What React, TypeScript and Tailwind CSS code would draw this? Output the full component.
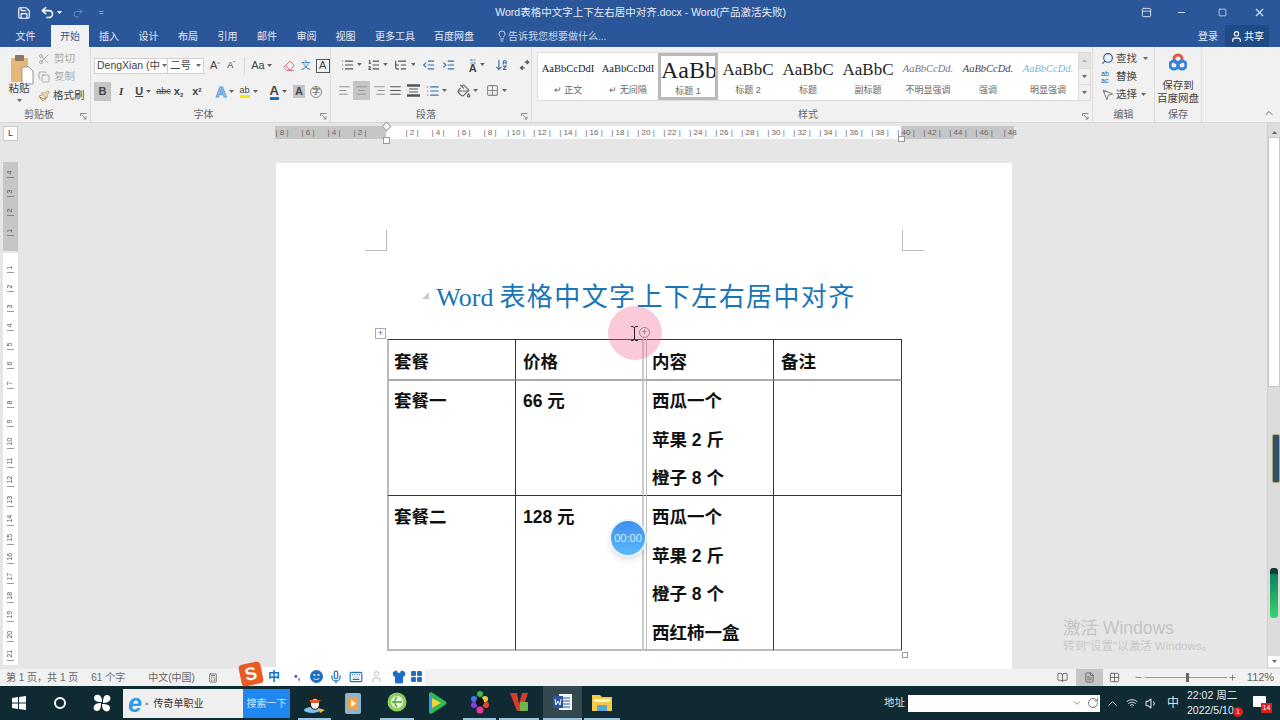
import React from "react"
import {
  AlignCenter, AlignJustify, AlignLeft, AlignRight, ArrowDownAZ, ArrowLeftRight, BookOpen, Calculator, ChevronDown, ChevronUp, Copy, Eraser, FileText,
  Grid2x2, IndentDecrease, IndentIncrease, Keyboard, LayoutGrid, Lightbulb, List, ListOrdered, ListTree, Mic, Minus, MousePointer2, PaintBucket,
  Paintbrush, PanelTop, Plus, Redo2, RotateCw, Save, Scissors, Search, Shirt, Square, Undo2, User, Volume1, Wifi, X,
} from "lucide-react"

const Caret = ({ className = "" }: { className?: string }) => (
  <svg width="5" height="3" viewBox="0 0 5 3" className={className}>
    <path d="M0 0h5L2.5 3z" fill="#666" />
  </svg>
)

const Launcher = () => (
  <svg width="7" height="7" viewBox="0 0 7 7" fill="none" stroke="#888" strokeWidth="1">
    <path d="M.5 3V.5H6.500M2 2l4 4M6 3.500V6H3.500" />
  </svg>
)

function Tab({ w, label, active }: { w: string; label: string; active?: boolean }) {
  return (
    <div className={`${w} h-full flex items-center justify-center text-[10px] ${active ? "bg-[#f1f1f1] text-[#2b579a]" : "text-[#e4ebf5]"}`}>
      {label}
    </div>
  )
}

function Group({ w, label, pr = "", children, launcher = true }: { w: string; label: string; pr?: string; children: React.ReactNode; launcher?: boolean }) {
  return (
    <div className={`${w} h-full flex flex-col border-r border-[#dcdcdc] shrink-0`}>
      <div className="h-[60px] shrink-0">{children}</div>
      <div className={`flex-1 flex items-center justify-center relative text-[10px] text-[#666] ${pr}`}>
        {label}
        {launcher && (
          <span className="absolute right-[3px] top-[6px]">
            <Launcher />
          </span>
        )}
      </div>
    </div>
  )
}

function StyleItem({ sample, label, sampleClass, selected }: { sample: string; label: string; sampleClass: string; selected?: boolean }) {
  return (
    <div className={`w-[60px] h-full flex flex-col items-center overflow-hidden shrink-0 border-[3px] ${selected ? "border-[#b9b9b9]" : "border-transparent"}`}>
      <div className={`h-[28px] flex items-center whitespace-nowrap font-['Liberation_Serif',serif] ${sampleClass}`}>{sample}</div>
      <div className="text-[9px] text-[#666] mt-[1px] whitespace-nowrap">{label}</div>
    </div>
  )
}

const HRuler = ({ nums, className = "" }: { nums: number[]; className?: string }) => (
  <div className={`h-full flex ${className}`}>
    {nums.map((n) => (
      <div key={n} className="w-[26px] shrink-0 text-center text-[8px] leading-[13px] text-[#666] whitespace-nowrap">
        {n === 48 ? "| 48" : "| " + n + " |"}
      </div>
    ))}
  </div>
)

const VRuler = ({ nums, className }: { nums: number[]; className: string }) => (
  <div className={className}>
    {nums.map((n) => (
      <div key={n} className="h-[19.300px] shrink-0 flex items-center justify-center text-[7px] text-[#555] [writing-mode:vertical-rl] rotate-180">
        {"| " + n}
      </div>
    ))}
  </div>
)

const cell = "text-[17.500px] font-bold leading-[38.600px] text-[#111] whitespace-nowrap overflow-hidden"
const col1 = "pl-[5px] border-l-2 border-l-[#bbb] border-r border-r-[#333]"
const col2 = "pl-[7px] border-r-2 border-r-[#ccc]"
const col3 = "pl-[8px] border-r border-r-[#333]"
const col4 = "pl-[7px] border-r border-r-[#333]"
const rowTop = "pt-[3px] border-t border-t-[#333]"
const rowMid = "pt-[1px] border-t-2 border-t-[#aaa]"
const rowEnd = "pt-[2px] border-t border-t-[#333] border-b-2 border-b-[#bbb]"

function Pinned({ w, line, active, children }: { w: string; line?: boolean; active?: boolean; children: React.ReactNode }) {
  return (
    <div className={`${w} h-full shrink-0 flex items-center justify-center ${active ? "bg-[#34484f]" : ""} ${line ? "border-b-2 border-[#9cc4dc]" : ""}`}>
      {children}
    </div>
  )
}

export default function App() {
  return (
    <div className="w-[1280px] h-[720px] overflow-hidden relative font-['Liberation_Sans','Noto_Sans_CJK_SC',sans-serif] select-none bg-[#e6e6e6]">
      {/* title bar */}
      <div className="h-[25px] bg-[#2b579a] flex items-center text-white">
        <div className="w-[31px] flex justify-end">
          <Save size={14} strokeWidth={2} />
        </div>
        <div className="w-[24px] flex justify-end">
          <Undo2 size={15} strokeWidth={2.500} />
        </div>
        <Caret className="ml-[2px] brightness-[3]" />
        <div className="ml-[10px] opacity-30">
          <Redo2 size={12} />
        </div>
        <div className="ml-[15px] text-[8px] opacity-80">=</div>
        <div className="w-[390px] shrink-0 text-center text-[10.500px] text-[#e8eef7] ml-[342px] whitespace-nowrap">
          Word表格中文字上下左右居中对齐.docx - Word(产品激活失败)
        </div>
        <div className="ml-[305px] flex items-center text-[#dfe7f3]">
          <PanelTop size={11} />
          <Minus size={11} className="ml-[24px]" />
          <Square size={9} className="ml-[31px]" />
          <X size={13} className="ml-[26px]" />
        </div>
      </div>

      {/* tabs */}
      <div className="h-[22px] bg-[#2b579a] flex items-center">
        <div className="w-[51px] text-center text-[10px] text-[#e4ebf5]">文件</div>
        <Tab w="w-[38px]" label="开始" active />
        <Tab w="w-[40px]" label="插入" />
        <Tab w="w-[39px]" label="设计" />
        <Tab w="w-[40px]" label="布局" />
        <Tab w="w-[39px]" label="引用" />
        <Tab w="w-[40px]" label="邮件" />
        <Tab w="w-[39px]" label="审阅" />
        <Tab w="w-[39px]" label="视图" />
        <Tab w="w-[60px]" label="更多工具" />
        <Tab w="w-[58px]" label="百度网盘" />
        <div className="ml-[13px] flex items-center text-[10px] text-[#c6d4e8] whitespace-nowrap">
          <Lightbulb size={12} />
          <span>告诉我您想要做什么...</span>
        </div>
        <div className="ml-auto flex items-center h-full">
          <span className="text-[10px] text-[#e4ebf5] mr-[7px]">登录</span>
          <div className="w-[44px] h-full bg-[#1f4a85] flex items-center justify-center gap-[1px] text-[10px] text-white">
            <User size={13} />
            共享
          </div>
          <div className="w-[11px]" />
        </div>
      </div>

      {/* ribbon */}
      <div className="h-[76px] bg-[#f1f1f1] border-b border-[#d8d8d8] flex text-[#444]">
        <Group w="w-[91px]" label="剪贴板" pr="pr-[12px]">
          <div className="flex h-full">
            <div className="w-[38px] pl-[5px] flex flex-col items-center pt-[8px]">
              <svg width="24" height="30" viewBox="0 0 24 30">
                <rect x="1" y="3" width="17" height="24" rx="1" fill="#e6b877" />
                <rect x="5" y="0" width="9" height="6" rx="1" fill="#8b7460" />
                <path d="M12 12h7l4 4v13H12z" fill="#fff" stroke="#999" />
              </svg>
              <span className="text-[10.500px] leading-[13px] mt-[-3px] -ml-[5px]">粘贴</span>
              <Caret className="mt-[4px] -ml-[5px]" />
            </div>
            <div className="flex flex-col pt-[4px] text-[10.500px] gap-[3.500px]">
              <div className="h-[15px] flex items-center gap-[4px] text-[#aaa] whitespace-nowrap">
                <Scissors size={12} />
                剪切
              </div>
              <div className="h-[15px] flex items-center gap-[4px] text-[#aaa] whitespace-nowrap">
                <Copy size={12} />
                复制
              </div>
              <div className="h-[15px] flex items-center gap-[3px] whitespace-nowrap">
                <Paintbrush size={12} className="text-[#b8862f]" />
                格式刷
              </div>
            </div>
          </div>
        </Group>

        <Group w="w-[240px]" label="字体" pr="pr-[14px]">
          <div className="pl-[3px] pt-[9px]">
            <div className="flex items-center h-[19px]">
              <div className="w-[74px] h-[16px] bg-white border border-[#d0d0d0] flex items-center pl-[2px] text-[10.500px] whitespace-nowrap overflow-hidden">
                DengXian (中
                <Caret className="ml-[2px] shrink-0" />
              </div>
              <div className="w-[36px] h-[16px] bg-white border border-l-0 border-[#d0d0d0] flex items-center pl-[2px] text-[10.500px]">
                二号
                <Caret className="ml-auto mr-[2px]" />
              </div>
              <span className="ml-[6px] text-[11px]">A<sup className="text-[6px]">^</sup></span>
              <span className="ml-[7px] text-[9px]">A<sup className="text-[6px]">ˇ</sup></span>
              <span className="ml-[9px] border-l border-[#d8d8d8] pl-[6px] text-[11px]">Aa</span>
              <Caret className="ml-[2px]" />
              <Eraser size={12} className="ml-[11px] text-[#d86a82]" />
              <span className="ml-[6px] text-[10px] leading-[10px] text-[#3e7fb5]">文</span>
              <span className="ml-[5px] w-[14px] h-[14px] border border-[#555] flex items-center justify-center text-[11px]">A</span>
            </div>
            <div className="flex items-center h-[19px] mt-[7px] text-[11px]">
              <div className="w-[17px] h-[19px] bg-[#c6c6c6] flex items-center justify-center font-bold">B</div>
              <span className="ml-[8px] italic font-bold font-['Liberation_Serif',serif]">I</span>
              <span className="ml-[12px] underline font-bold">U</span>
              <Caret className="ml-[3px]" />
              <span className="ml-[5px] text-[9px] line-through">abc</span>
              <span className="ml-[3px] font-bold">x<sub className="text-[6px]">2</sub></span>
              <span className="ml-[9px] font-bold">x<sup className="text-[6px]">2</sup></span>
              <span className="ml-[14px] text-[15px] leading-[15px] font-bold text-[#bcd6ef] [-webkit-text-stroke:1px_#5b9bd5]">A</span>
              <Caret className="ml-[2px]" />
              <span className="ml-[6px] text-[9px] leading-[10px] border-b-[3px] border-[#ffe600]">ab</span>
              <Caret className="ml-[3px]" />
              <span className="ml-[12px] text-[13px] leading-[13px] border-b-[3px] border-[#1f6fb5] font-semibold">A</span>
              <Caret className="ml-[3px]" />
              <span className="ml-[6px] w-[12px] h-[13px] bg-[#c4c4c4] flex items-center justify-center font-bold">A</span>
              <span className="ml-[5px] w-[12px] h-[12px] rounded-full border border-[#888] flex items-center justify-center text-[8px]">字</span>
            </div>
          </div>
        </Group>

        <Group w="w-[201px]" label="段落" pr="pr-[10px]">
          <div className="pl-[10px] pt-[9px]">
            <div className="flex items-center h-[17px] text-[#555]">
              <List size={14} />
              <Caret className="ml-[3px]" />
              <ListOrdered size={14} className="ml-[5px]" />
              <Caret className="ml-[3px]" />
              <ListTree size={14} className="ml-[6px]" />
              <Caret className="ml-[3px]" />
              <IndentDecrease size={14} className="ml-[7px] text-[#3b6ea5]" />
              <IndentIncrease size={14} className="ml-[6px] text-[#3b6ea5]" />
              <span className="ml-[11px] w-[14px] h-[14px] flex flex-col items-center text-[#444]">
                <ArrowLeftRight size={8} className="text-[#3b6ea5]" />
                <span className="text-[11px] leading-[7px] font-bold">A</span>
              </span>
              <Caret className="ml-[1px]" />
              <ArrowDownAZ size={14} className="ml-[10px] text-[#3b6ea5]" />
              <svg width="14" height="14" viewBox="0 0 14 14" fill="none" stroke="#555" strokeWidth="1.500" className="ml-[9px]">
                <path d="M2 10h5M5 8l-2 2 2 2M12 4H7M9 2l2 2-2 2" />
              </svg>
            </div>
            <div className="flex items-center h-[19px] mt-[8px] -ml-[3px] text-[#999]">
              <AlignLeft size={13} />
              <div className="ml-[2px] w-[17px] h-[19px] bg-[#c6c6c6] flex items-center justify-center">
                <AlignCenter size={13} />
              </div>
              <AlignRight size={13} className="ml-[3px]" />
              <AlignJustify size={13} className="ml-[3px] text-[#555]" />
              <svg width="13" height="13" viewBox="0 0 13 13" fill="none" stroke="#555" className="ml-[5px]">
                <path d="M0 1.500h13M0 11.500h13" strokeWidth="2.500" />
                <path d="M2 5h9M2 8h9" />
              </svg>
              <List size={14} className="ml-[6px] text-[#3b6ea5]" />
              <Caret className="ml-[2px]" />
              <PaintBucket size={14} className="ml-[10px] text-[#666]" />
              <Caret className="ml-[2px]" />
              <Grid2x2 size={13} className="ml-[8px] text-[#888]" />
              <Caret className="ml-[3px]" />
            </div>
          </div>
        </Group>

        <Group w="w-[561px]" label="样式" pr="pr-[8px]">
          <div className="flex pl-[5px] pt-[5px]">
            <div className="w-[542px] h-[49px] bg-white border border-[#dcdcdc] flex">
              <StyleItem sample="AaBbCcDdI" label="↵ 正文" sampleClass="text-[10.500px] text-[#222]" />
              <StyleItem sample="AaBbCcDdI" label="↵ 无间隔" sampleClass="text-[10.500px] text-[#222]" />
              <StyleItem sample="AaBb" label="标题 1" sampleClass="text-[24px] text-[#222] self-start" selected />
              <StyleItem sample="AaBbC" label="标题 2" sampleClass="text-[17px] text-[#222]" />
              <StyleItem sample="AaBbC" label="标题" sampleClass="text-[17px] text-[#222]" />
              <StyleItem sample="AaBbC" label="副标题" sampleClass="text-[17px] text-[#222]" />
              <StyleItem sample="AaBbCcDd." label="不明显强调" sampleClass="text-[10.500px] italic text-[#777]" />
              <StyleItem sample="AaBbCcDd." label="强调" sampleClass="text-[10.500px] italic text-[#444]" />
              <StyleItem sample="AaBbCcDd." label="明显强调" sampleClass="text-[10.500px] italic text-[#7fb3d5]" />
            </div>
            <div className="w-[12px] h-[49px] flex flex-col border border-l-0 border-[#dcdcdc]">
              <div className="flex-1 bg-[#e3e3e3] flex items-center justify-center"><Caret className="rotate-180 opacity-40" /></div>
              <div className="flex-1 flex items-center justify-center border-y border-[#dcdcdc]"><Caret /></div>
              <div className="flex-1 flex items-center justify-center"><Caret /></div>
            </div>
          </div>
        </Group>

        <Group w="w-[62px]" label="编辑" launcher={false}>
          <div className="pl-[8px] pt-[4px] text-[10.500px] flex flex-col gap-[3px]">
            <div className="h-[15px] flex items-center gap-[2px] whitespace-nowrap">
              <Search size={13} className="text-[#2b579a] -scale-x-100" />
              查找
              <Caret className="ml-[4px]" />
            </div>
            <div className="h-[15px] flex items-center gap-[2px] whitespace-nowrap">
              <span className="text-[7px] leading-[7px] text-[#2b579a] w-[13px]">ab<br />ac</span>
              替换
            </div>
            <div className="h-[15px] flex items-center gap-[2px] whitespace-nowrap">
              <MousePointer2 size={13} className="text-[#888]" />
              选择
              <Caret className="ml-[2px]" />
            </div>
          </div>
        </Group>

        <Group w="w-[47px]" label="保存" launcher={false}>
          <div className="flex flex-col items-center pt-[6px] text-[10.500px] leading-[13px] text-center">
            <svg width="18" height="18" viewBox="0 0 18 18" fill="none" strokeWidth="3">
              <circle cx="9" cy="6" r="4" stroke="#e0584a" />
              <circle cx="5" cy="12" r="4" stroke="#2f86d8" />
              <circle cx="13" cy="12" r="4" stroke="#2f86d8" />
            </svg>
            <span className="mt-[8px]">保存到</span>
            <span className="whitespace-nowrap">百度网盘</span>
          </div>
        </Group>

        <div className="flex-1 relative">
          <ChevronUp size={12} className="absolute right-[5px] bottom-[3px] text-[#666]" />
        </div>
      </div>

      {/* document area */}
      <div className="h-[546px] flex">
        <div className="w-[22px] shrink-0 pl-[3px] pt-[3px]">
          <div className="w-[15px] h-[15px] bg-white border border-[#c8c8c8] flex items-center justify-center text-[9px] text-[#444]">
            L
          </div>
          <VRuler nums={[4, 3, 2, 1]} className="w-[15px] h-[89px] mt-[21px] bg-[#c6c6c6] flex flex-col justify-end pb-[9px]" />
          <VRuler
            nums={[1, 2, 3, 4, 5, 6, 7, 8, 9, 10, 11, 12, 13, 14, 15, 16, 17, 18, 19, 20, 21]}
            className="w-[15px] h-[412px] mt-[2px] bg-white flex flex-col pt-[7px] overflow-hidden"
          />
        </div>

        <div className="w-[1245px] shrink-0">
          <div className="h-[13px] mt-[3px] flex ml-[253px] relative">
            <div className="w-[111px] h-full bg-[#c6c6c6] flex justify-end pr-[13px] overflow-hidden">
              <HRuler nums={[8, 6, 4, 2]} />
            </div>
            <div className="w-[515px] h-full bg-white overflow-hidden pl-[13px]">
              <HRuler nums={[2, 4, 6, 8, 10, 12, 14, 16, 18, 20, 22, 24, 26, 28, 30, 32, 34, 36, 38]} />
            </div>
            <div className="w-[113px] h-full bg-[#c6c6c6]">
              <HRuler nums={[40, 42, 44, 46, 48]} className="-ml-[8px]" />
            </div>
            <div className="absolute left-[108px] -top-[3px] w-[7px] h-[7px] bg-white border border-[#999] rotate-45" />
            <div className="absolute left-[108px] top-[11px] w-[7px] h-[7px] bg-white border border-[#999]" />
            <div className="absolute left-[623px] top-[10px] w-[7px] h-[6px] bg-white border border-[#999]" />
          </div>

          <div className="ml-[254px] mt-[24px] w-[736px] h-[506px] bg-white pt-[114px] pl-[111px] relative">
            <div className="absolute left-[89px] top-[67px] w-[22px] h-[21px] border-r border-b border-[#bbb]" />
            <div className="absolute left-[626px] top-[67px] w-[22px] h-[21px] border-l border-b border-[#bbb]" />

            <div className="h-[36px] w-[514px] ml-[2px] text-center leading-[36px] whitespace-nowrap text-[#1a75b8] text-[26px] tracking-[1.400px] font-['Noto_Sans_CJK_SC',sans-serif]">
              <span className="font-['Liberation_Serif',serif] text-[26px] tracking-normal mr-[6px]">Word</span>
              表格中文字上下左右居中对齐
            </div>
            <div className="absolute left-[146px] top-[122px] w-0 h-0 border-l-[7px] border-t-[7px] border-l-transparent border-t-transparent border-b-[7px] border-b-[#ccc]" />

            <div className="mt-[26px] w-[515px] h-[312px] grid grid-cols-[129px_128px_130px_128px] grid-rows-[40px_116px_156px]">
              <div className={`${cell} ${col1} ${rowTop}`}>套餐</div>
              <div className={`${cell} ${col2} ${rowTop}`}>价格</div>
              <div className={`${cell} ${col3} ${rowTop}`}>内容</div>
              <div className={`${cell} ${col4} ${rowTop}`}>备注</div>

              <div className={`${cell} ${col1} ${rowMid}`}>套餐一</div>
              <div className={`${cell} ${col2} ${rowMid}`}>66 元</div>
              <div className={`${cell} ${col3} ${rowMid}`}>
                西瓜一个<br />苹果 2 斤<br />橙子 8 个
              </div>
              <div className={`${cell} ${col4} ${rowMid}`} />

              <div className={`${cell} ${col1} ${rowEnd}`}>套餐二</div>
              <div className={`${cell} ${col2} ${rowEnd}`}>128 元</div>
              <div className={`${cell} ${col3} ${rowEnd}`}>
                西瓜一个<br />苹果 2 斤<br />橙子 8 个<br />西红柿一盒
              </div>
              <div className={`${cell} ${col4} ${rowEnd}`} />
            </div>

            {/* column drag guide */}
            <div className="absolute left-[370px] top-[176px] w-px h-[312px] bg-[#bbb]" />
            <div className="absolute left-[99px] top-[165px] w-[11px] h-[11px] bg-white border border-[#aaa] flex items-center justify-center text-[9px] leading-[9px] text-[#666]">+</div>
            <div className="absolute left-[626px] top-[489px] w-[6px] h-[6px] bg-white border border-[#999]" />
          </div>
        </div>

        <div className="w-[13px] shrink-0 bg-[#dcdcdc] flex flex-col border-l border-[#d0d0d0]">
          <div className="h-[14px] flex items-end justify-center"><Caret className="rotate-180 mb-[3px]" /></div>
          <div className="h-[250px] bg-white border border-[#c8c8c8]" />
          <div className="h-[11px] mt-auto bg-white flex items-center justify-center mb-[2px]"><Caret /></div>
        </div>
      </div>

      {/* status bar */}
      <div className="h-[17px] bg-[#f1f1f1] flex items-center text-[10px] text-[#666] whitespace-nowrap">
        <span className="ml-[6px]">第 1 页，共 1 页</span>
        <span className="ml-[13px]">61 个字</span>
        <span className="ml-[23px]">中文(中国)</span>
        <Calculator size={10} className="ml-[13px]" />
        <BookOpen size={11} className="ml-[839px]" />
        <div className="ml-[8px] w-[27px] h-full bg-[#c6c6c6] flex items-center justify-center">
          <FileText size={11} />
        </div>
        <Grid2x2 size={11} className="ml-[6px]" />
        <Minus size={9} className="ml-[14px]" />
        <div className="ml-[2px] w-[82px] h-px bg-[#999] relative">
          <div className="absolute left-[41px] -top-[4px] w-[3px] h-[9px] bg-[#666]" />
        </div>
        <Plus size={9} className="ml-[1px]" />
        <span className="ml-[10px] text-[11px]">112%</span>
      </div>

      {/* taskbar */}
      <div className="h-[34px] bg-[#0f2a33] flex items-center text-white">
        <Pinned w="w-[38px]">
          <svg width="14" height="14" viewBox="0 0 14 14" fill="#fff">
            <path d="M0 2l6-1v5.500H0zM7 1l7-1v6.500H7zM0 7.500h6V13l-6-1zM7 7.500h7V14l-7-1z" />
          </svg>
        </Pinned>
        <Pinned w="w-[43px]">
          <div className="w-[12px] h-[12px] rounded-full border-2 border-white" />
        </Pinned>
        <Pinned w="w-[42px]">
          <svg width="20" height="20" viewBox="0 0 20 20" fill="#fff">
            <path d="M10 9C5 9 2 8 2 5s3-4 5-3 3 3 3 7zM11 10c0-5 1-8 4-8s4 3 3 5-3 3-7 3zM10 11c5 0 8 1 8 4s-3 4-5 3-3-3-3-7zM9 10c0 5-1 8-4 8s-4-3-3-5 3-3 7-3z" />
          </svg>
        </Pinned>
        <div className="w-[120px] h-[29px] bg-[#efefef] flex items-center pl-[5px] text-[10px] text-[#333] whitespace-nowrap">
          <span className="text-[25px] leading-[25px] font-bold text-[#2b9be8] italic">e</span>
          <span className="ml-[3px] mr-[5px] text-[#999]">▪</span>
          传奇单职业
        </div>
        <div className="w-[47px] h-[29px] bg-[#1e88f0] flex items-center justify-center text-[10px] text-[#d5e8fc] whitespace-nowrap">搜索一下</div>
        <div className="w-[8px]" />
        <Pinned w="w-[33px]" line>
          <svg width="24" height="24" viewBox="0 0 24 24">
            <ellipse cx="9" cy="20" rx="8" ry="3" fill="#7cc4e8" />
            <ellipse cx="12" cy="11" rx="6" ry="9" fill="#222" />
            <ellipse cx="12" cy="14" rx="4" ry="5" fill="#f5f5f5" />
            <path d="M6 10h12l-3 3H8z" fill="#e05a30" />
            <path d="M15 18l7 2-5 3z" fill="#f5b53c" />
          </svg>
        </Pinned>
        <div className="w-[3px]" />
        <Pinned w="w-[38px]">
          <svg width="16" height="21" viewBox="0 0 16 21">
            <rect width="16" height="21" rx="2" fill="#8fb4c8" />
            <rect x="3" y="4" width="10" height="13" rx="1" fill="#f0a24a" />
            <path d="M6 7l5 3.500-5 3.500z" fill="#fff" />
          </svg>
        </Pinned>
        <div className="w-[8px]" />
        <Pinned w="w-[34px]" line>
          <svg width="20" height="22" viewBox="0 0 20 22">
            <circle cx="10" cy="11" r="9.500" fill="#8ccf5a" />
            <circle cx="10" cy="11" r="6" fill="#e9f7dd" />
            <path d="M5 11h10M10 6c-3 3-3 7 0 10" stroke="#46a63c" strokeWidth="1.500" fill="none" />
          </svg>
        </Pinned>
        <div className="w-[4px]" />
        <Pinned w="w-[38px]">
          <svg width="20" height="22" viewBox="0 0 20 22">
            <path d="M2 2c0-2 2-2 3-1.500l13 8.500c2 1 2 3 0 4L5 21.500C3 22 2 21 2 20z" fill="#36b84a" />
            <path d="M2 2l10 9-10 9z" fill="#2ba0e8" />
            <path d="M5 6l9 5-9 5z" fill="#f4d23c" />
          </svg>
        </Pinned>
        <div className="w-[7px]" />
        <Pinned w="w-[33px]" line>
          <svg width="22" height="24" viewBox="0 0 22 24">
            <circle cx="11" cy="4" r="3" fill="#3fb54a" />
            <circle cx="16" cy="9" r="3" fill="#e8d23a" />
            <circle cx="17" cy="15" r="3" fill="#e8443a" />
            <circle cx="11" cy="20" r="3.500" fill="#e83a9c" />
            <circle cx="5" cy="15" r="3" fill="#8a3ae8" />
            <circle cx="5" cy="9" r="3" fill="#3a78e8" />
            <circle cx="11" cy="12" r="4" fill="#111" />
          </svg>
        </Pinned>
        <div className="w-[3px]" />
        <Pinned w="w-[40px]" line>
          <svg width="18" height="20" viewBox="0 0 18 20">
            <path d="M0 1h7l2 11 3-11h6l-6 18H7z" fill="#d83a2c" />
            <rect x="10" y="10" width="8" height="9" rx="1" fill="#6cb84a" />
          </svg>
        </Pinned>
        <div className="w-[4px]" />
        <Pinned w="w-[39px]" line active>
          <svg width="20" height="18" viewBox="0 0 20 18">
            <rect x="6" y="1" width="13" height="16" fill="#f4f6f8" />
            <path d="M9 5h8M9 8h8M9 11h8M9 14h8" stroke="#2b579a" strokeWidth="1" />
            <rect x="0" y="3" width="10" height="12" fill="#2b579a" />
            <path d="M2 6l1 6 2-4 2 4 1-6" stroke="#fff" strokeWidth="1" fill="none" />
          </svg>
        </Pinned>
        <div className="w-[2px]" />
        <Pinned w="w-[36px]" line>
          <svg width="20" height="18" viewBox="0 0 20 18">
            <path d="M0 2h8l2 2h10v14H0z" fill="#f4c84a" />
            <rect x="2" y="6" width="16" height="3" fill="#fff3c4" />
            <rect x="5" y="12" width="10" height="6" fill="#5ba7d8" />
          </svg>
        </Pinned>

        <span className="ml-[264px] text-[10.500px] text-[#d8e0e4] whitespace-nowrap">地址</span>
        <div className="ml-[3px] w-[192px] h-[17px] bg-white flex items-center justify-end pr-[1px] text-[#777]">
          <ChevronDown size={10} />
          <RotateCw size={12} className="ml-[5px]" />
        </div>
        <ChevronUp size={15} className="ml-[5px] text-[#e0e6e8]" strokeWidth={1.500} />
        <Wifi size={12} className="ml-[6px] text-[#d0d8dc]" />
        <Volume1 size={13} className="ml-[7px] text-[#e0e6e8]" />
        <span className="ml-[9px] text-[12px] text-[#e0e6e8]">中</span>
        <div className="ml-[8px] text-[10.500px] leading-[15px] text-[#e6ecee] whitespace-nowrap">
          22:02 周二<br />2022/5/10
        </div>
      </div>

      {/* overlays */}
      <div className="absolute left-[608px] top-[306px] w-[54px] h-[54px] rounded-full bg-[#f4688f]/35" />
      <svg width="9" height="15" viewBox="0 0 9 15" fill="none" stroke="#222" strokeWidth="1" className="absolute left-[630px] top-[326px]">
        <path d="M1 .5h2l1.500 1 1.500-1h2M4.500 1.500v12M1 14.500h2l1.500-1 1.500 1h2" />
      </svg>
      <div className="absolute left-[639px] top-[327px] w-[11px] h-[11px] rounded-full border border-[#888] flex items-center justify-center text-[9px] leading-[9px] text-[#666]">+</div>
      <div className="absolute left-[609px] top-[519px] w-[38px] h-[38px] rounded-full bg-gradient-to-b from-[#3f8ff0] to-[#5bb8fa] border-2 border-[#e8f4fc] shadow-md flex items-center justify-center text-[11px] text-[#d8ecff]">00:00</div>

      <div className="absolute left-[1063px] top-[617px] text-[#c4c4c4] text-[17.500px] leading-[22px] whitespace-nowrap">激活 Windows</div>
      <div className="absolute left-[1063px] top-[639px] text-[#c8c8c8] text-[11.500px] leading-[14px] whitespace-nowrap">转到"设置"以激活 Windows。</div>

      <div className="absolute left-[1272px] top-[434px] w-[8px] h-[49px] rounded-[2px] bg-[#33506a] border border-[#b0a76a]" />
      <div className="absolute left-[1270px] top-[568px] w-[8px] h-[50px] rounded-[3px] bg-gradient-to-b from-[#12805a] to-[#35d86c] border-t-[6px] border-[#16393f]" />

      {/* IME toolbar */}
      <div className="absolute left-[262px] top-[667px] w-[163px] h-[19px] bg-white flex items-center text-[#1d6fc4]">
        <span className="ml-[6px] text-[12px] font-bold">中</span>
        <span className="ml-[14px] text-[10px] font-bold leading-[10px]">•,</span>
        <svg width="13" height="13" viewBox="0 0 13 13" className="ml-[10px]">
          <circle cx="6.500" cy="6.500" r="6.500" fill="#1d6fc4" />
          <circle cx="4.500" cy="5" r="1" fill="#fff" />
          <circle cx="8.500" cy="5" r="1" fill="#fff" />
          <path d="M3.500 8c1.500 2 4.500 2 6 0" stroke="#fff" fill="none" />
        </svg>
        <Mic size={14} className="ml-[6px]" />
        <Keyboard size={14} className="ml-[6px]" />
        <User size={13} className="ml-[7px] text-[#ccc]" />
        <Shirt size={14} className="ml-[9px]" fill="#1d6fc4" />
        <LayoutGrid size={13} className="ml-[4px]" fill="#1d6fc4" />
      </div>
      <div className="absolute left-[240px] top-[663px] w-[22px] h-[22px] rounded-[4px] bg-[#ea5a24] -rotate-12 flex items-center justify-center text-white font-bold text-[18px] leading-[18px]">S</div>

      {/* tray badges */}
      <div className="absolute left-[1233px] top-[707px] w-[10px] h-[10px] rounded-full bg-[#d81e1e] text-white text-[7px] leading-[10px] text-center">1</div>
      <div className="absolute left-[1253px] top-[696px] w-[13px] h-[11px] bg-white rounded-[1px]" />
      <div className="absolute left-[1261px] top-[703px] w-[11px] h-[10px] bg-[#d81e1e] text-white text-[7px] leading-[10px] text-center">14</div>
    </div>
  )
}
